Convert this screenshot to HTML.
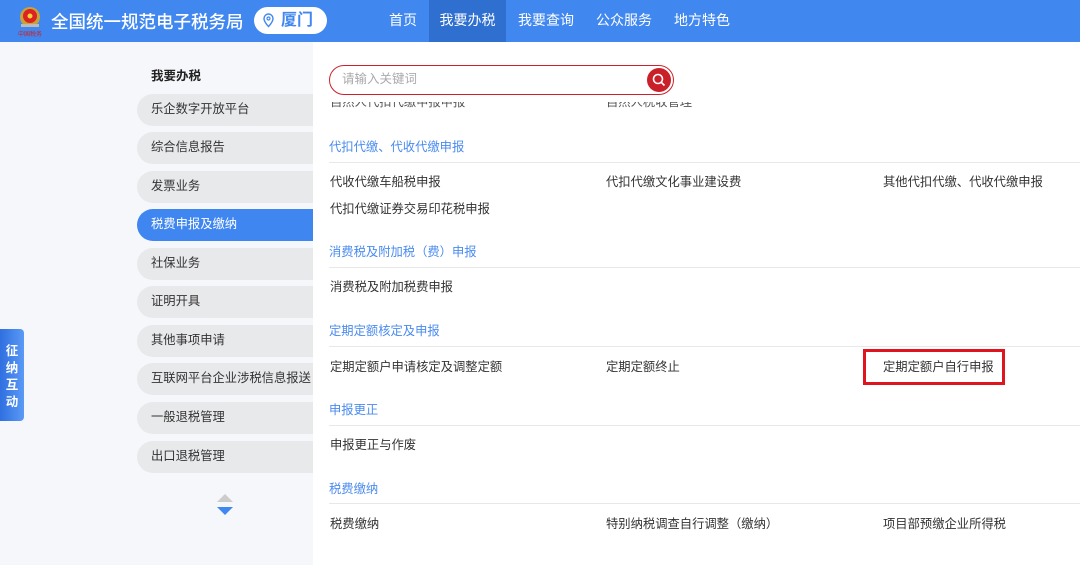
<!DOCTYPE html><html><head><meta charset="utf-8"><style>
*{margin:0;padding:0;box-sizing:border-box}
body{width:1080px;height:565px;overflow:hidden;background:#fff;font-family:"Liberation Sans","Noto Sans CJK SC",sans-serif;position:relative;color:#333}
.hd{position:absolute;left:0;top:0;width:1080px;height:42px;background:#4087f0;color:#fff}
.logo{position:absolute;left:15px;top:5px;width:30px;height:32px}
.title{position:absolute;left:51px;top:9px;font-size:17.5px;font-weight:500}
.city{position:absolute;left:254px;top:7px;width:73px;height:27px;background:#fff;border-radius:14px;color:#4087f0;font-size:16px;font-weight:bold;padding-left:27px;line-height:27px}
.nav a{position:absolute;top:0;height:42px;line-height:40px;font-size:14px;color:#fff;text-decoration:none;text-align:center}
.act{background:#2e6fd0}
.left{position:absolute;left:0;top:42px;width:313px;height:523px;background:#f5f7fa}
.lt{position:absolute;left:151px;top:65px;font-size:12.5px;font-weight:bold;color:#222}
.pill{position:absolute;left:137px;width:176px;height:32px;border-radius:16px 0 0 16px;background:#e8e9eb;font-size:12.3px;line-height:31px;padding-left:14px;color:#333;white-space:nowrap;overflow:hidden}
.pill.on{background:#3f86f0;color:#fff}
.side{position:absolute;left:0;top:329px;width:24px;height:92px;background:linear-gradient(90deg,#2f6fe0,#5b9af5);border-radius:0 4px 4px 0;color:#fff;font-size:12.5px;font-weight:bold;line-height:17px;text-align:center;padding-top:14px}
.search{position:absolute;left:329px;top:65px;width:345px;height:30px;border:1.5px solid #d0202c;border-radius:15px;font-size:12.5px;color:#aaa;line-height:27px;padding-left:12px}
.sbtn{position:absolute;right:2px;top:2px;width:24px;height:24px;border-radius:50%;background:#c9202a}
.st{position:absolute;left:329px;font-size:12.3px;color:#4a8bef}
.ln{position:absolute;left:329px;width:751px;height:1px;background:#e8e8e8}
.it{position:absolute;font-size:12.3px;color:#333;white-space:nowrap}
</style></head><body>
<div class="hd">
<svg class="logo" viewBox="0 0 30 32"><circle cx="15" cy="12" r="10" fill="#c8a33a"/><circle cx="15" cy="11" r="7" fill="#d22"/><circle cx="15" cy="11" r="2.5" fill="#f3d23a"/><rect x="6" y="19" width="18" height="3" fill="#bbb"/><text x="3" y="31" font-size="6" fill="#c22">中国税务</text></svg>
<div class="title">全国统一规范电子税务局</div>
<div class="city"><svg style="position:absolute;left:9px;top:6px" width="11" height="15" viewBox="0 0 11 15"><path d="M5.5 1a4.5 4.5 0 0 0-4.5 4.5c0 3.5 4.5 8 4.5 8s4.5-4.5 4.5-8A4.5 4.5 0 0 0 5.5 1z" fill="none" stroke="#4087f0" stroke-width="1.4"/><circle cx="5.5" cy="5.5" r="1.5" fill="none" stroke="#4087f0" stroke-width="1.2"/></svg>厦门</div>
<div class="nav"><a style="left:378px;width:50px">首页</a><a class="act" style="left:429px;width:77px">我要办税</a><a style="left:507px;width:78px">我要查询</a><a style="left:585px;width:78px">公众服务</a><a style="left:663px;width:78px">地方特色</a></div>
</div>
<div class="left"></div>
<div class="lt">我要办税</div>
<div class="pill" style="top:94px">乐企数字开放平台</div>
<div class="pill" style="top:132px">综合信息报告</div>
<div class="pill" style="top:171px">发票业务</div>
<div class="pill on" style="top:209px">税费申报及缴纳</div>
<div class="pill" style="top:248px">社保业务</div>
<div class="pill" style="top:286px">证明开具</div>
<div class="pill" style="top:325px">其他事项申请</div>
<div class="pill" style="top:363px">互联网平台企业涉税信息报送</div>
<div class="pill" style="top:402px">一般退税管理</div>
<div class="pill" style="top:441px">出口退税管理</div>
<svg style="position:absolute;left:216px;top:494px" width="18" height="24" viewBox="0 0 18 24"><path d="M9 0L17 8H1z" fill="#ccc"/><path d="M1 13H17L9 21z" fill="#4087f0"/></svg>
<div class="side">征<br>纳<br>互<br>动</div>
<div class="it" style="left:330px;top:92px;color:#555;clip-path:inset(10px 0 0 0)">自然人代扣代缴申报申报</div>
<div class="it" style="left:606px;top:92px;color:#555;clip-path:inset(10px 0 0 0)">自然人税收管理</div>
<div style="position:absolute;left:313px;top:42px;width:767px;height:58px;background:#fff;clip-path:inset(0 0 0 0);display:none"></div>
<div class="search">请输入关键词<div class="sbtn"><svg width="24" height="24" viewBox="0 0 24 24"><circle cx="11" cy="11" r="4.5" fill="none" stroke="#fff" stroke-width="1.6"/><path d="M14.3 14.3L17.5 17.5" stroke="#fff" stroke-width="1.6"/></svg></div></div>
<div class="st" style="top:137px">代扣代缴、代收代缴申报</div><div class="ln" style="top:162px"></div>
<div class="it" style="left:330px;top:172px">代收代缴车船税申报</div><div class="it" style="left:606px;top:172px">代扣代缴文化事业建设费</div><div class="it" style="left:883px;top:172px">其他代扣代缴、代收代缴申报</div>
<div class="it" style="left:330px;top:199px">代扣代缴证券交易印花税申报</div>
<div class="st" style="top:242px">消费税及附加税（费）申报</div><div class="ln" style="top:267px"></div>
<div class="it" style="left:330px;top:277px">消费税及附加税费申报</div>
<div class="st" style="top:321px">定期定额核定及申报</div><div class="ln" style="top:346px"></div>
<div class="it" style="left:330px;top:357px">定期定额户申请核定及调整定额</div><div class="it" style="left:606px;top:357px">定期定额终止</div><div class="it" style="left:883px;top:357px">定期定额户自行申报</div>
<div style="position:absolute;left:863px;top:349px;width:142px;height:36px;border:3px solid #e0141e"></div>
<div class="st" style="top:400px">申报更正</div><div class="ln" style="top:425px"></div>
<div class="it" style="left:330px;top:435px">申报更正与作废</div>
<div class="st" style="top:479px">税费缴纳</div><div class="ln" style="top:503px"></div>
<div class="it" style="left:330px;top:514px">税费缴纳</div><div class="it" style="left:606px;top:514px">特别纳税调查自行调整（缴纳）</div><div class="it" style="left:883px;top:514px">项目部预缴企业所得税</div>
</body></html>
